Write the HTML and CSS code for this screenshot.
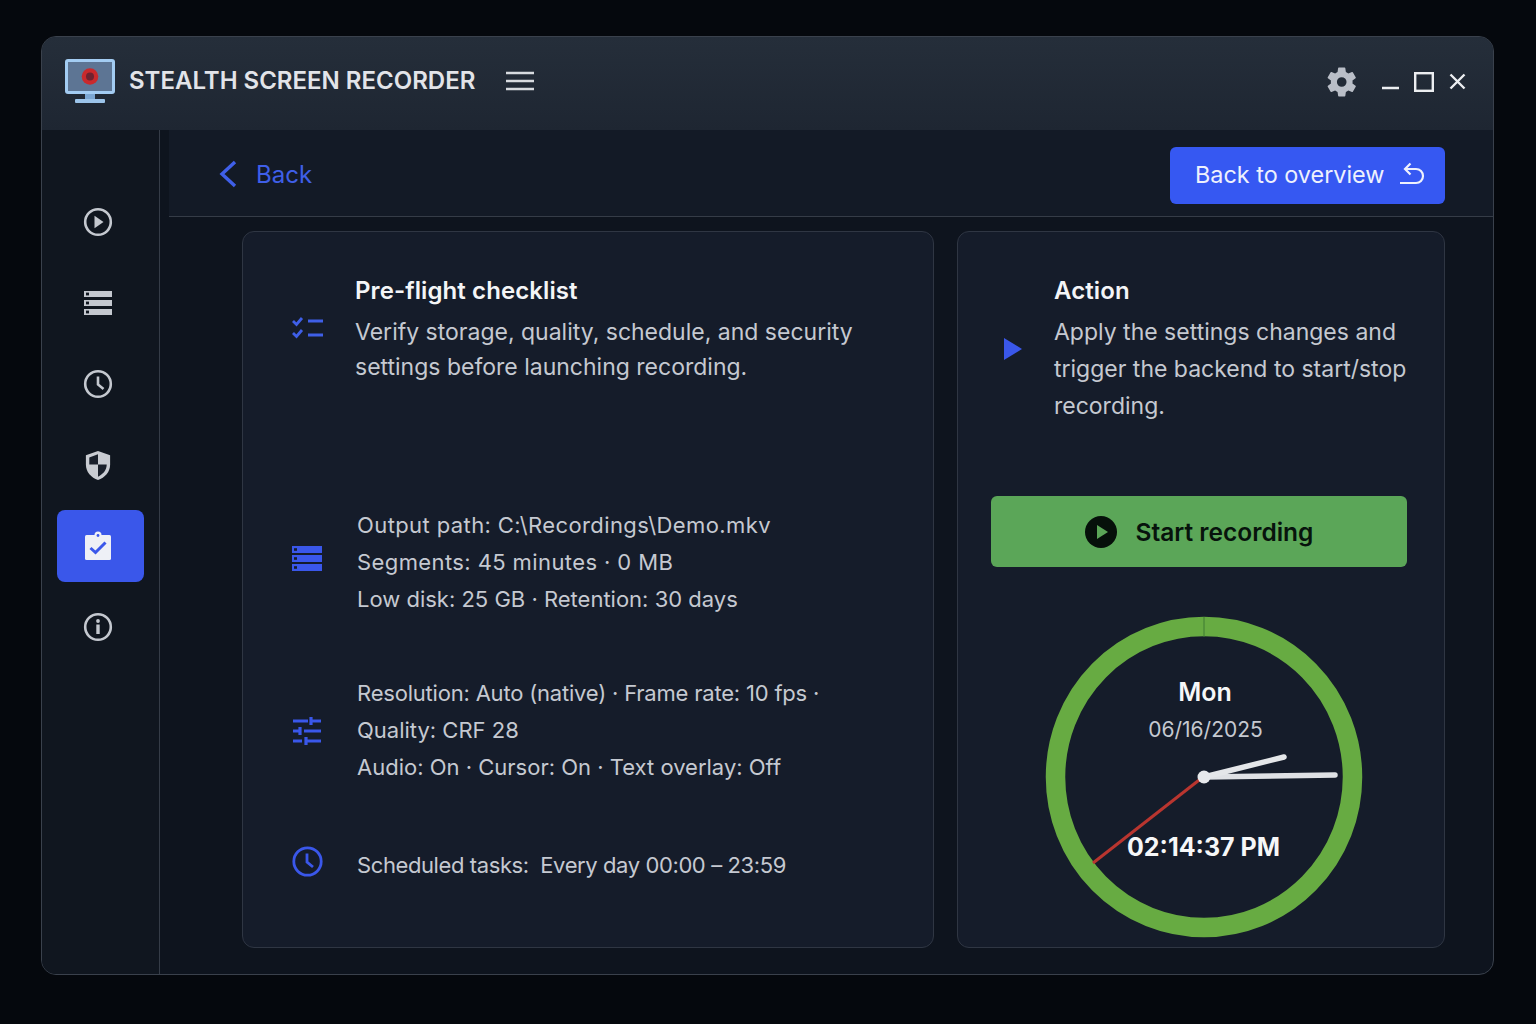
FILE: index.html
```html
<!DOCTYPE html>
<html lang="en">
<head>
    <meta charset="UTF-8">
    <meta name="viewport" content="width=device-width, initial-scale=1.0">
    <title>Stealth Screen Recorder</title>
    <link rel="stylesheet" href="styles.css">
</head>
<body>
    <div class="window">
        <!-- Title bar -->
        <header class="titlebar">
            <svg class="logo" width="50" height="45" viewBox="0 0 50 45">
                <rect x="20" y="34" width="10" height="8" fill="#7ba6d2"/>
                <rect x="10" y="40" width="30" height="4" rx="1" fill="#9cc4ea"/>
                <rect x="0" y="0" width="50" height="35" rx="3" fill="#a3ccf2"/>
                <rect x="3" y="3" width="44" height="29" fill="#5d7594"/>
                <circle cx="25" cy="17.500" r="8.300" fill="#c9292c"/>
                <circle cx="25" cy="17.500" r="4" fill="#6e2230"/>
            </svg>
            <h1 class="app-name">STEALTH SCREEN RECORDER</h1>
            <svg class="menu-icon" width="30" height="20" viewBox="0 0 30 20">
                <path d="M1 2h28M1 10h28M1 18h28" stroke="#d8dbe0" stroke-width="2.400"/>
            </svg>
            <div class="window-controls">
                <svg class="gear" width="34" height="34" viewBox="0 0 24 24">
                    <path fill="#b9bec7" fill-rule="evenodd" d="M19.400 13c.05-.33.07-.66.07-1s-.02-.67-.07-1l2.160-1.680a.5.5 0 0 0 .12-.65l-2.050-3.540a.5.5 0 0 0-.62-.22l-2.550 1.020a7.500 7.500 0 0 0-1.720-1l-.39-2.700A.5.5 0 0 0 13.850 1.800h-4.100a.5.5 0 0 0-.5.43l-.39 2.700c-.62.26-1.200.6-1.720 1L4.600 4.910a.5.5 0 0 0-.62.22L1.930 8.670a.5.5 0 0 0 .12.65L4.200 11c-.05.33-.07.66-.07 1s.02.67.07 1l-2.150 1.680a.5.5 0 0 0-.12.65l2.050 3.540c.13.22.39.3.62.22l2.550-1.020c.52.4 1.100.74 1.720 1l.39 2.700c.04.25.25.43.5.43h4.100c.25 0 .46-.18.5-.43l.39-2.700c.62-.26 1.200-.6 1.720-1l2.550 1.020c.23.08.49 0 .62-.22l2.050-3.540a.5.5 0 0 0-.12-.65L19.400 13zM11.800 15.400a3.400 3.400 0 1 1 0-6.800 3.400 3.400 0 0 1 0 6.800z"/>
                </svg>
                <svg class="win-btn minimize" width="17" height="4" viewBox="0 0 17 4"><path d="M0 2h17" stroke="#eceef1" stroke-width="2.600"/></svg>
                <svg class="win-btn" width="20" height="20" viewBox="0 0 20 20"><rect x="1.200" y="1.200" width="17.600" height="17.600" fill="none" stroke="#eceef1" stroke-width="2.400"/></svg>
                <svg class="win-btn" width="17" height="17" viewBox="0 0 17 17"><path d="M1.500 1.500l14 14M15.500 1.500l-14 14" stroke="#eceef1" stroke-width="2.400"/></svg>
            </div>
        </header>

        <div class="body">
            <!-- Sidebar -->
            <nav class="sidebar">
                <div class="nav-item">
                    <svg width="30" height="30" viewBox="0 0 30 30">
                        <circle cx="15" cy="15" r="12.800" fill="none" stroke="#c4c8cf" stroke-width="2.600"/>
                        <path d="M11.500 8.800l9 6.200-9 6.200z" fill="#c4c8cf"/>
                    </svg>
                </div>
                <div class="nav-item">
                    <svg width="30" height="26" viewBox="0 0 30 26">
                        <g fill="#c4c8cf">
                            <rect x="1" y="1" width="28" height="6"/>
                            <rect x="1" y="10" width="28" height="6"/>
                            <rect x="1" y="19" width="28" height="6"/>
                        </g>
                        <g fill="#10161f">
                            <rect x="3" y="2.600" width="3" height="2.800"/>
                            <rect x="3" y="11.600" width="3" height="2.800"/>
                            <rect x="3" y="20.600" width="3" height="2.800"/>
                        </g>
                    </svg>
                </div>
                <div class="nav-item">
                    <svg width="30" height="30" viewBox="0 0 30 30">
                        <circle cx="15" cy="15" r="12.800" fill="none" stroke="#c4c8cf" stroke-width="2.600"/>
                        <path d="M15 7.500V15.500l5.500 4.500" fill="none" stroke="#c4c8cf" stroke-width="2.600"/>
                    </svg>
                </div>
                <div class="nav-item">
                    <svg width="28" height="31" viewBox="0 0 28 32">
                        <path d="M14 1L1.500 5.500V15c0 8 5.500 13.500 12.500 16 7-2.500 12.500-8 12.500-16V5.500z" fill="#c9ccd2"/>
                        <path d="M14 4.500L5 7.800V15h9zM14 15v12.500c5-2.300 9-6.500 9-12.500z" fill="#1a202b"/>
                    </svg>
                </div>
                <div class="nav-item active">
                    <svg width="28" height="30" viewBox="0 0 28 30">
                        <rect x="1" y="4" width="26" height="25" rx="1.500" fill="#eef0f6"/>
                        <circle cx="14" cy="4" r="3.500" fill="#eef0f6"/>
                        <circle cx="14" cy="4.500" r="1.400" fill="#3a57ea"/>
                        <path d="M6.500 17l5 4.500 10-10" fill="none" stroke="#3a57ea" stroke-width="3"/>
                    </svg>
                </div>
                <div class="nav-item">
                    <svg width="30" height="30" viewBox="0 0 30 30">
                        <circle cx="15" cy="15" r="12.800" fill="none" stroke="#c4c8cf" stroke-width="2.600"/>
                        <circle cx="15" cy="9" r="1.900" fill="#c4c8cf"/>
                        <rect x="13.300" y="12.500" width="3.400" height="9.500" fill="#c4c8cf"/>
                    </svg>
                </div>
            </nav>

            <main class="main">
                <div class="topbar">
                    <a class="back-link">
                        <svg width="18" height="28" viewBox="0 0 18 28"><path d="M16 2L3 14l13 12" fill="none" stroke="#3f5fe8" stroke-width="3.400"/></svg>
                        Back
                    </a>
                    <button class="overview-btn">
                        Back to overview
                        <svg width="26" height="24" viewBox="0 0 26 24">
                            <path d="M1 21h16c4 0 7-3 7-7s-3-7-7-7H7" fill="none" stroke="#eef1fd" stroke-width="2.200"/>
                            <path d="M11.500 1.500L6 7l5.500 5.500" fill="none" stroke="#eef1fd" stroke-width="2.200"/>
                        </svg>
                    </button>
                </div>

                <div class="cards">
                    <!-- Pre-flight checklist -->
                    <section class="card checklist">
                        <div class="row intro">
                            <svg class="row-icon" width="32" height="24" viewBox="0 0 32 24">
                                <path d="M1 5l3.500 3.500L10 2M1 17l3.500 3.500L10 14" fill="none" stroke="#3f5fe8" stroke-width="2.800"/>
                                <path d="M16 5h15M16 19h15" stroke="#3f5fe8" stroke-width="2.800"/>
                            </svg>
                            <div>
                                <h2 class="card-title">Pre-flight checklist</h2>
                                <p class="card-text">Verify storage, quality, schedule, and security settings before launching recording.</p>
                            </div>
                        </div>

                        <div class="row info first">
                            <svg class="row-icon raised" width="30" height="25" viewBox="0 0 30 25">
                                <g fill="#3a57ea">
                                    <rect y="0" width="30" height="7"/>
                                    <rect y="9" width="30" height="7"/>
                                    <rect y="18" width="30" height="7"/>
                                </g>
                                <g fill="#151c2a">
                                    <rect x="2" y="2.200" width="3" height="2.600"/>
                                    <rect x="2" y="11.200" width="3" height="2.600"/>
                                    <rect x="2" y="20.200" width="3" height="2.600"/>
                                </g>
                            </svg>
                            <p class="info-text"><span class="spaced">Output path: C:\Recordings\Demo.mkv</span><br><span class="spaced">Segments: 45 minutes · 0 MB</span><br>Low disk: 25 GB · Retention: 30 days</p>
                        </div>

                        <div class="row info">
                            <svg class="row-icon" width="30" height="30" viewBox="0 0 30 30">
                                <path d="M1 5h15M19 5h10M1 15h7M12 15h17M1 25h9M14 25h15" stroke="#3a57ea" stroke-width="2.800" fill="none"/>
                                <path d="M19 1v8M8 11v8M14 21v8" stroke="#3a57ea" stroke-width="3.200" fill="none"/>
                            </svg>
                            <p class="info-text"><span class="tight">Resolution: Auto (native) · Frame rate: 10 fps ·</span><br>Quality: CRF 28<br>Audio: On · Cursor: On · Text overlay: Off</p>
                        </div>

                        <div class="row info last">
                            <svg class="row-icon raised" width="31" height="31" viewBox="0 0 31 31">
                                <circle cx="15.500" cy="15.500" r="13.700" fill="none" stroke="#3a57ea" stroke-width="2.800"/>
                                <path d="M15 7.500V16l6 5" fill="none" stroke="#3a57ea" stroke-width="2.800"/>
                            </svg>
                            <p class="info-text tighter">Scheduled tasks:&nbsp; Every day 00:00 – 23:59</p>
                        </div>
                    </section>

                    <!-- Action -->
                    <section class="card action">
                        <div class="row action-intro">
                            <svg class="row-icon" width="18" height="22" viewBox="0 0 18 22"><path d="M0 0l18 11L0 22z" fill="#3a57ea"/></svg>
                            <div>
                                <h2 class="card-title">Action</h2>
                                <p class="card-text action-text">Apply the settings changes and trigger the backend to start/stop recording.</p>
                            </div>
                        </div>

                        <button class="start-btn">
                            <svg width="32" height="32" viewBox="0 0 32 32">
                                <circle cx="16" cy="16" r="16" fill="#06100a"/>
                                <path d="M12 9l11 7-11 7z" fill="#5ba658"/>
                            </svg>
                            Start recording
                        </button>

                        <svg class="clock" width="318" height="322" viewBox="0 0 318 322">
                            <ellipse cx="159" cy="161" rx="148.500" ry="150.500" fill="none" stroke="#67ab42" stroke-width="19.500"/>
                            <path d="M159 1v20" stroke="#3f7a33" stroke-width="1"/>
                            <path d="M158 161L48 247" stroke="#b9352f" stroke-width="3"/>
                            <path d="M159 161L290 159" stroke="#dfe1e5" stroke-width="5.500" stroke-linecap="round"/>
                            <path d="M159 161L239 141" stroke="#e4e6e9" stroke-width="5.500" stroke-linecap="round"/>
                            <circle cx="159" cy="161" r="6.500" fill="#e7e9ec"/>
                            <text class="clock-day" x="160" y="85" text-anchor="middle">Mon</text>
                            <text class="clock-date" x="160.500" y="121" text-anchor="middle">06/16/2025</text>
                            <text class="clock-time" x="158.500" y="240" text-anchor="middle">02:14:37 PM</text>
                        </svg>
                    </section>
                </div>
            </main>
        </div>
    </div>
</body>
</html>
```

FILE: styles.css
```css
/* General Styling */
* {
    box-sizing: border-box;
    margin: 0;
    padding: 0;
    font-family: Inter, "Liberation Sans", sans-serif;
}

body {
    background-color: #05080d;
    width: 1536px;
    height: 1024px;
    padding: 36px 42px 49px 41px;
    overflow: hidden;
}

.window {
    height: 100%;
    display: flex;
    flex-direction: column;
    background-color: #0e141e;
    border: 1px solid #3a414c;
    border-radius: 15px;
    overflow: hidden;
}

/* Title bar */
.titlebar {
    height: 93px;
    flex-shrink: 0;
    display: flex;
    align-items: center;
    padding: 0 27px 4px 23px;
    background: linear-gradient(#252e3a, #1e2632);
}

.logo {
    margin-right: 14px;
}

.app-name {
    font-size: 24px;
    font-weight: 600;
    margin-bottom: 2px;
    color: #e2e4e9;
}

.menu-icon {
    margin: 0 0 2px 30px;
}

.window-controls {
    margin-left: auto;
    display: flex;
    align-items: center;
}

.gear {
    margin-right: 23px;
}

.win-btn {
    margin-right: 15px;
}

.win-btn:last-child {
    margin-right: 0;
}

.minimize {
    margin-top: 12px;
}

.body {
    flex: 1;
    display: flex;
    min-height: 0;
}

/* Sidebar */
.sidebar {
    width: 118px;
    flex-shrink: 0;
    padding: 56px 15px 0 15px;
    background-color: #10161f;
    border-right: 1px solid #353c47;
    display: flex;
    flex-direction: column;
    align-items: stretch;
    gap: 9px;
}

.nav-item {
    height: 72px;
    display: flex;
    align-items: center;
    justify-content: center;
    border-radius: 8px;
    padding-right: 6px;
}

.nav-item.active {
    background-color: #3a57ea;
}

/* Main area */
.main {
    flex: 1;
    display: flex;
    flex-direction: column;
    padding-left: 9px;
    min-width: 0;
}

.topbar {
    height: 87px;
    flex-shrink: 0;
    display: flex;
    align-items: center;
    justify-content: space-between;
    padding: 4px 48px 0 50px;
    background-color: #131a26;
    border-bottom: 1px solid #353c47;
}

.back-link {
    display: flex;
    align-items: center;
    gap: 19px;
    margin-bottom: 2px;
    font-size: 24px;
    color: #3f5fe8;
}

.overview-btn {
    width: 275px;
    height: 57px;
    display: flex;
    align-items: center;
    gap: 15px;
    padding: 0 0 2px 25px;
    border: none;
    border-radius: 6px;
    background-color: #3658f2;
    color: #eef1fd;
    font-size: 23.400px;
}

.cards {
    flex: 1;
    display: flex;
    gap: 23px;
    padding: 14px 48px 26px 73px;
    min-height: 0;
}

.card {
    background-color: #151c2a;
    border: 1px solid #2f3643;
    border-radius: 12px;
}

/* Pre-flight checklist */
.checklist {
    width: 692px;
    flex-shrink: 0;
    padding: 43px 60px 0 49px;
}

.action {
    flex: 1;
    padding: 43px 37px 0 33px;
    display: flex;
    flex-direction: column;
}

.row {
    display: flex;
    align-items: center;
}

.row-icon {
    flex-shrink: 0;
}

.intro .row-icon {
    margin: 0 31px 4px 0;
}

.card-title {
    font-size: 24px;
    font-weight: 600;
    line-height: 32px;
    letter-spacing: 0.1px;
    color: #f4f5f7;
}

.card-text {
    margin-top: 8px;
    font-size: 23px;
    line-height: 35px;
    color: #c5c9d1;
}

.action-text {
    margin-top: 7px;
    line-height: 37px;
}

.info-text {
    font-size: 22px;
    line-height: 37px;
    color: #c5c9d1;
}

.spaced {
    letter-spacing: 0.4px;
}

.tight {
    letter-spacing: -0.2px;
}

.tighter {
    letter-spacing: -0.4px;
}

.info .row-icon {
    margin-right: 35px;
}

.info .raised {
    margin: 0 34px 8px 0;
}

.info {
    margin-top: 57px;
}

.info.first {
    margin-top: 122px;
}

.info.first .raised {
    margin-right: 35px;
}

.info.last {
    margin-top: 60px;
}

/* Action */
.action-intro {
    margin-right: -12px;
}

.action-intro .row-icon {
    margin: 0 32px 2px 13px;
}

.start-btn {
    margin-top: 71px;
    height: 71px;
    flex-shrink: 0;
    display: flex;
    align-items: center;
    justify-content: center;
    gap: 19px;
    border: none;
    border-radius: 6px;
    background-color: #5ba658;
    color: #07130c;
    font-size: 24.500px;
    font-weight: 600;
}

.clock {
    margin: 49px 0 0 54px;
}

.clock-day {
    font-size: 25px;
    font-weight: 600;
    fill: #f6f7f8;
}

.clock-date {
    font-size: 21px;
    fill: #c5c9d1;
}

.clock-time {
    font-size: 25px;
    font-weight: 700;
    fill: #f6f7f8;
}
```
